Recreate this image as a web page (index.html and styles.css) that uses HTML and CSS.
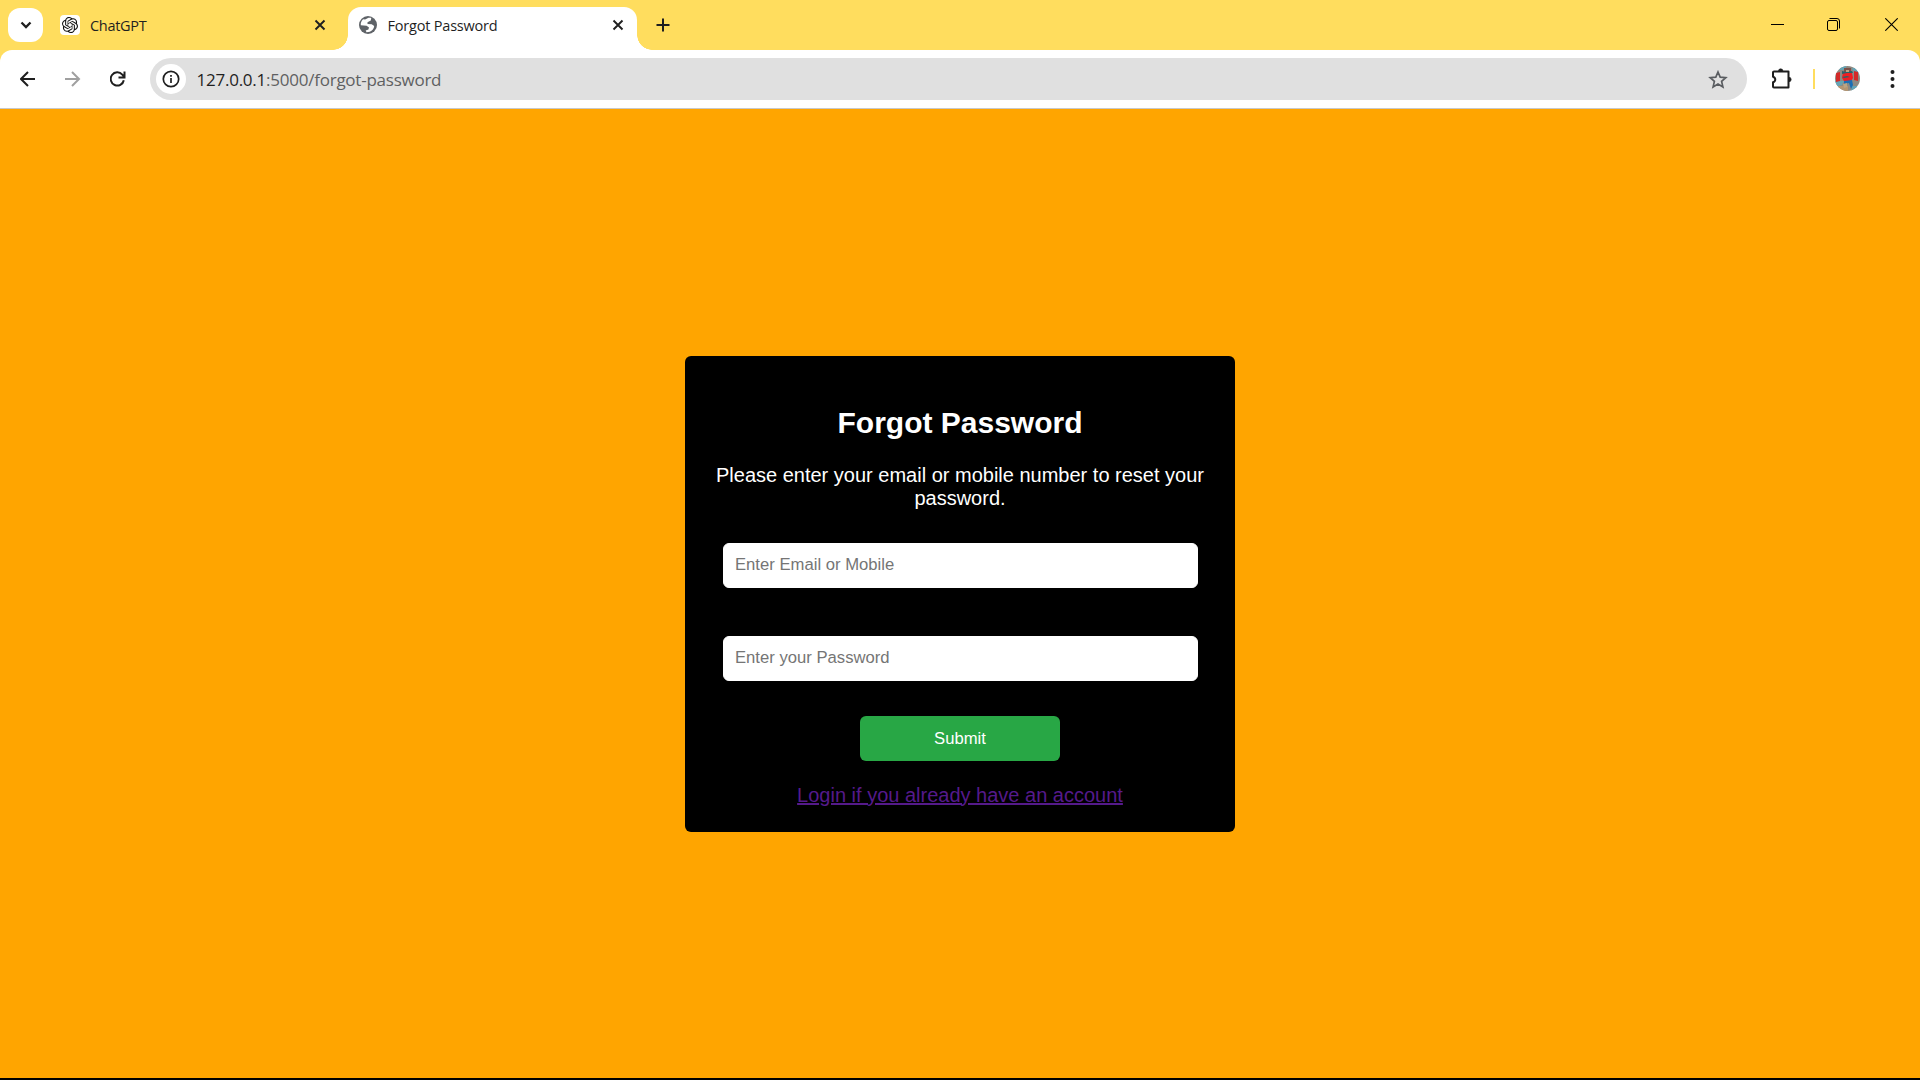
FILE: index.html
```html
<!DOCTYPE html>
<html lang="en">
<head>
<meta charset="utf-8">
<title>Forgot Password</title>
<link rel="stylesheet" href="styles.css">
</head>
<body>
<header class="tabstrip">
  <button class="tab-search" aria-label="Search tabs">
    <svg width="12" height="8" viewBox="0 0 12 8"><path d="M1.500 1.500 6 6l4.500-4.500" fill="none" stroke="#1f1f1f" stroke-width="2.300"/></svg>
  </button>
  <div class="tab tab-idle">
    <span class="favicon-tile">
      <svg width="16" height="16" viewBox="0 0 24 24" fill="#111"><path d="M22.2819 9.8211a5.9847 5.9847 0 0 0-.5157-4.9108 6.0462 6.0462 0 0 0-6.5098-2.9A6.0651 6.0651 0 0 0 4.9807 4.1818a5.9847 5.9847 0 0 0-3.9977 2.9 6.0462 6.0462 0 0 0 .7427 7.0966 5.98 5.98 0 0 0 .511 4.9107 6.051 6.051 0 0 0 6.5146 2.9001A5.9847 5.9847 0 0 0 13.2599 24a6.0557 6.0557 0 0 0 5.7718-4.2058 5.9894 5.9894 0 0 0 3.9977-2.9001 6.0557 6.0557 0 0 0-.7475-7.0729zm-9.022 12.6081a4.4755 4.4755 0 0 1-2.8764-1.0408l.1419-.0804 4.7783-2.7582a.7948.7948 0 0 0 .3927-.6813v-6.7369l2.02 1.1686a.071.071 0 0 1 .038.052v5.5826a4.504 4.504 0 0 1-4.4945 4.4944zm-9.6607-4.1254a4.4708 4.4708 0 0 1-.5346-3.0137l.142.0852 4.783 2.7582a.7712.7712 0 0 0 .7806 0l5.8428-3.3685v2.3324a.0804.0804 0 0 1-.0332.0615L9.74 19.9502a4.4992 4.4992 0 0 1-6.1408-1.6464zM2.3408 7.8956a4.485 4.485 0 0 1 2.3655-1.9728V11.6a.7664.7664 0 0 0 .3879.6765l5.8144 3.3543-2.0201 1.1685a.0757.0757 0 0 1-.071 0l-4.8303-2.7865A4.504 4.504 0 0 1 2.3408 7.872zm16.5963 3.8558L13.1038 8.364 15.1192 7.2a.0757.0757 0 0 1 .071 0l4.8303 2.7913a4.4944 4.4944 0 0 1-.6765 8.1042v-5.6772a.79.79 0 0 0-.407-.667zm2.0107-3.0231l-.142-.0852-4.7735-2.7818a.7759.7759 0 0 0-.7854 0L9.409 9.2297V6.8974a.0662.0662 0 0 1 .0284-.0615l4.8303-2.7866a4.4992 4.4992 0 0 1 6.6802 4.66zM8.3065 12.863l-2.02-1.1638a.0804.0804 0 0 1-.038-.0567V6.0742a4.4992 4.4992 0 0 1 7.3757-3.4537l-.142.0805L8.704 5.459a.7948.7948 0 0 0-.3927.6813zm1.0976-2.3654l2.602-1.4998 2.6069 1.4998v2.9994l-2.5974 1.4997-2.6067-1.4997Z"/></svg>
    </span>
    <span class="tab-title title-chat">ChatGPT</span>
    <svg class="close" width="12" height="12" viewBox="0 0 12 12"><path d="m1.500 1.500 9 9m0-9-9 9" stroke="#1f1f1f" stroke-width="1.900"/></svg>
  </div>
  <div class="tab tab-active">
    <svg class="globe" width="20" height="20" viewBox="0 0 20 20">
      <circle cx="10" cy="10" r="9" fill="#5f6368"/>
      <path fill="#fff" d="M10.500 2.800h2.800L12.800 5.500 9.500 7.300v1.600l4.200.3 2.500 1.800c-.1 2.500-2 4.800-4.400 5.800l-3.300.4-.8-1.700 2.700-1 .6-2.100-2.400-1.700-5.800-.4c-.3-2.300.6-4.600 2.300-6l2 .1z"/>
    </svg>
    <span class="tab-title title-forgot">Forgot Password</span>
    <svg class="close" width="12" height="12" viewBox="0 0 12 12"><path d="m1.500 1.500 9 9m0-9-9 9" stroke="#1f1f1f" stroke-width="1.900"/></svg>
  </div>
  <svg class="new-tab" width="14" height="14" viewBox="0 0 14 14"><path d="M7 .5v13M.5 7h13" stroke="#1f1f1f" stroke-width="2"/></svg>
  <div class="window-controls">
    <svg width="13" height="13" viewBox="0 0 13 13"><path d="M0 6.500h13" stroke="#000"/></svg>
    <svg width="13" height="13" viewBox="0 0 13 13" fill="none" stroke="#000"><rect x=".5" y="2.500" width="10" height="10" rx="1.500"/><path d="M2.500.5h7.500a2.500 2.500 0 0 1 2.500 2.500v7.500"/></svg>
    <svg class="window-close" width="13" height="13" viewBox="0 0 13 13"><path d="m.3.3 12.400 12.400m0-12.400L.3 12.700" stroke="#000" stroke-width="1.100"/></svg>
  </div>
</header>
<nav class="toolbar">
  <div class="nav-buttons">
    <svg width="16" height="16" viewBox="0 0 16 16" fill="none" stroke="#1f1f1f" stroke-width="2"><path d="M15 8H1.500M8 1 1 8l7 7"/></svg>
    <svg width="16" height="16" viewBox="0 0 16 16" fill="none" stroke="#a0a0a0" stroke-width="2"><path d="M0 8h13.500M7 1l7 7-7 7"/></svg>
    <svg width="16" height="16" viewBox="0 0 16 16" fill="none" stroke="#1f1f1f" stroke-width="2"><path d="M13.800 9.200A6.600 6.600 0 1 1 12.300 3.600L14 5.500M14.500.5v6H8.500"/></svg>
  </div>
  <div class="address">
    <span class="site-info">
      <svg width="18" height="18" viewBox="0 0 18 18"><circle cx="9" cy="9" r="7.700" fill="none" stroke="#1f1f1f" stroke-width="1.700"/><path d="M9 8v5M9 5v1.800" stroke="#1f1f1f" stroke-width="1.700"/></svg>
    </span>
    <span class="url"><span class="host">127.0.0.1</span>:5000/forgot-password</span>
    <svg class="star" width="20" height="19" viewBox="0 0 20 19"><path d="m10 2 2.200 5.200 5.600.5-4.200 3.700 1.300 5.500-4.900-2.900-4.900 2.900 1.300-5.500-4.200-3.700 5.600-.5z" fill="none" stroke="#5a5d61" stroke-width="1.700"/></svg>
  </div>
  <svg class="extensions" width="22" height="22" viewBox="0 0 22 22"><path d="M3 3.500h14.500v16H3a1 1 0 0 1-1-1v-4.200c3-1 3-4.600 0-5.600V4.500a1 1 0 0 1 1-1z" fill="none" stroke="#1f1f1f" stroke-width="2" stroke-linejoin="round"/><path d="M7.500 3a2.200 2.200 0 0 1 4.400 0zM18 9.300a2.200 2.200 0 0 1 0 4.400z" fill="#1f1f1f" stroke="#1f1f1f" stroke-width=".6"/></svg>
  <span class="divider"></span>
  <svg class="avatar" width="25" height="25" viewBox="0 0 25 25">
    <defs><clipPath id="disc"><circle cx="12.500" cy="12.500" r="12.500"/></clipPath></defs>
    <g clip-path="url(#disc)">
      <path fill="#8d8a83" d="M0 0h25v25H0z"/>
      <path fill="#64a4b5" d="M0 15h9l-2 4-7 2zM6 0h5v4H4zM17 2h8v5h-6zM17 20h8v5h-9z"/>
      <path fill="#b59672" d="M3 20h10v5H3z"/>
      <path fill="#d32a29" d="M1 7l4-1v9l-4 1zM19 5l4 1v9l-4-1z"/>
      <path fill="#7c5149" d="M9 2h7v5H9z"/>
      <path fill="#f01d22" d="M8 6l9 1 1 5-2 3H9l-2-3z"/>
      <path fill="#27636c" d="M7 5l4 1 6-1 1 2-6 0-5 1zM7 11l5-1 3 1-6 1z"/>
      <path fill="#1a6eb5" d="M9 15l8-1 1 5-2 4-2-6-5 1z"/>
      <path fill="#bba483" d="M11 4h3v2h-3zM8 18l4-1v4l-3 1z"/>
    </g>
  </svg>
  <svg class="menu" width="5" height="18" viewBox="0 0 5 18" fill="#1f1f1f"><circle cx="2.500" cy="2" r="2"/><circle cx="2.500" cy="9" r="2"/><circle cx="2.500" cy="16" r="2"/></svg>
</nav>
<main class="page">
  <form class="card">
    <h2>Forgot Password</h2>
    <p>Please enter your email or mobile number to reset your password.</p>
    <input type="text" placeholder="Enter Email or Mobile">
    <input type="password" placeholder="Enter your Password">
    <button class="submit" type="button">Submit</button>
    <a class="login" href="#">Login if you already have an account</a>
  </form>
</main>
</body>
</html>
```
FILE: styles.css
```css
* { box-sizing: border-box; }

body {
  margin: 0;
  height: 1080px;
  display: flex;
  flex-direction: column;
  overflow: hidden;
  background: #ffdd5e;
  font-family: "Liberation Sans", Arial, sans-serif;
}

svg { display: block; flex: none; }

/* Tab strip */
.tabstrip {
  display: flex;
  height: 50px;
  background: #ffdd5e;
  font-family: "Open Sans", "Noto Sans", sans-serif;
}

.tab-search {
  display: grid;
  place-items: center;
  width: 35px;
  height: 34px;
  margin: 8px 0 0 8px;
  padding: 0;
  border: 0;
  border-radius: 12px;
  background: #fff;
}

.tab {
  display: flex;
  align-items: center;
  height: 43px;
  margin-top: 7px;
  padding-bottom: 7px;
}

.tab-idle { width: 305px; padding-left: 17px; padding-right: 22px; }

.tab-active {
  position: relative;
  width: 289px;
  padding-left: 10px;
  padding-right: 13.5px;
  border-radius: 13px 13px 0 0;
  background: #fff;
}

/* Curved feet on either side of the active tab */
.tab-active::before,
.tab-active::after {
  content: "";
  position: absolute;
  bottom: 0;
  width: 15px;
  height: 15px;
}

.tab-active::before {
  left: -15px;
  background: radial-gradient(circle at 0 0, transparent 14.5px, #fff 15px);
}

.tab-active::after {
  right: -15px;
  background: radial-gradient(circle at 100% 0, transparent 14.5px, #fff 15px);
}

.favicon-tile {
  display: grid;
  place-items: center;
  width: 20px;
  height: 20px;
  border-radius: 4px;
  background: #fff;
}

.tab-title {
  flex: 1;
  padding-top: 2px;
  font-size: 14.5px;
  line-height: 20px;
  color: #1f1f1f;
  white-space: nowrap;
}

.title-chat { margin-left: 10px; letter-spacing: -0.3px; }
.title-forgot { margin-left: 9.5px; letter-spacing: -0.2px; }

.new-tab { margin: 18px 0 0 19px; }

.window-controls {
  display: flex;
  gap: 43px;
  margin: 18px 22px 0 auto;
}

.window-close { margin-left: 2px; }

/* Toolbar */
.toolbar {
  display: flex;
  align-items: center;
  height: 59px;
  border-bottom: 1px solid #c8c8c8;
  border-radius: 12px 12px 0 0;
  background: #fff;
}

.nav-buttons {
  display: flex;
  gap: 29px;
  width: 150px;
  padding-left: 20px;
}

.address {
  display: flex;
  align-items: center;
  width: 1597px;
  height: 42px;
  padding: 0 19.5px 0 6px;
  border-radius: 21px;
  background: #e0e0e0;
}

.site-info {
  display: grid;
  place-items: center;
  width: 30px;
  height: 30px;
  border-radius: 50%;
  background: #fff;
}

.url {
  flex: 1;
  margin-left: 10.5px;
  padding-top: 1px;
  font-family: "Open Sans", "Noto Sans", sans-serif;
  font-size: 17px;
  line-height: 24px;
  letter-spacing: -0.24px;
  color: #5f6062;
}

.host { color: #1f1f1f; }
.extensions { margin-left: 23.5px; }

.divider {
  width: 2px;
  height: 20px;
  margin-left: 20.5px;
  background: #ffdd5e;
}

.avatar { margin: 0 0 1px 20px; }
.menu { margin-left: 30px; }

/* Page */
.page {
  display: flex;
  justify-content: center;
  align-items: center;
  height: 971px;
  background: #ffa500;
  border-bottom: 2px solid #000;
}

.card {
  display: flex;
  flex-direction: column;
  align-items: center;
  width: 550px;
  height: 476px;
  padding: 50px 25px 0;
  border-radius: 6px;
  background: #000;
  color: #fff;
  text-align: center;
}

.card h2 {
  margin: 0;
  font-size: 30px;
  line-height: 34px;
}

.card p {
  margin: 24px 0 33px;
  font-size: 20px;
  line-height: 23px;
}

.card input {
  width: 475px;
  height: 45px;
  margin-bottom: 48px;
  padding: 0 11.5px 1px;
  border: 1px solid #fff;
  border-radius: 6px;
  background: #fff;
  font: 16.67px "Liberation Sans", Arial, sans-serif;
}

.card input::placeholder { color: #757575; }
.card input[type="password"] { margin-bottom: 35px; }

.submit {
  width: 200px;
  height: 45px;
  padding: 1px 0 0;
  border: 0;
  border-radius: 6px;
  background: #28a745;
  color: #fff;
  font: 16.67px "Liberation Sans", Arial, sans-serif;
}

.login {
  margin-top: 23px;
  font-size: 20px;
  line-height: 23px;
  color: #551a8b;
  text-decoration-thickness: 2px;
}
```
